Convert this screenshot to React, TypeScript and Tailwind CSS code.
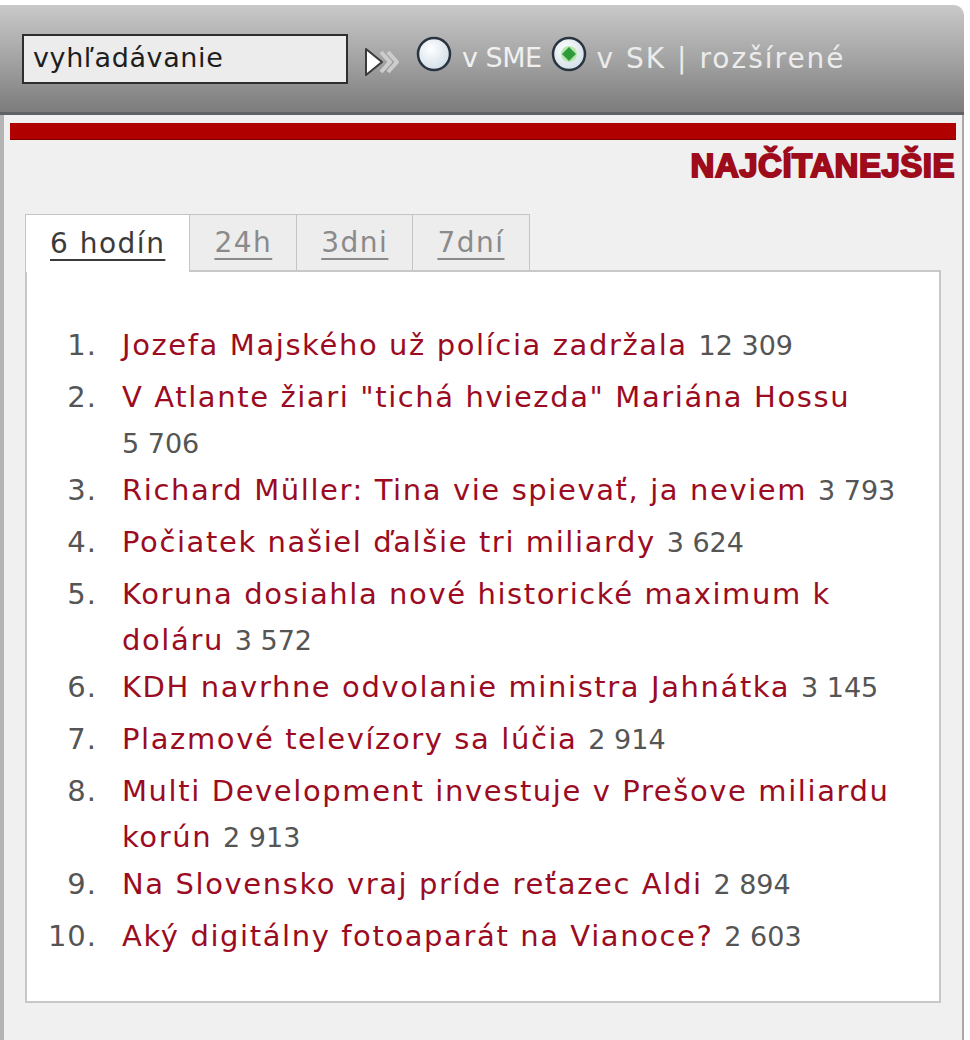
import React from 'react';

const items = [
  { title: 'Jozefa Majského už polícia zadržala', count: '12 309' },
  { title: 'V Atlante žiari "tichá hviezda" Mariána Hossu', count: '5 706' },
  { title: 'Richard Müller: Tina vie spievať, ja neviem', count: '3 793' },
  { title: 'Počiatek našiel ďalšie tri miliardy', count: '3 624' },
  { title: 'Koruna dosiahla nové historické maximum k doláru', count: '3 572' },
  { title: 'KDH navrhne odvolanie ministra Jahnátka', count: '3 145' },
  { title: 'Plazmové televízory sa lúčia', count: '2 914' },
  { title: 'Multi Development investuje v Prešove miliardu korún', count: '2 913' },
  { title: 'Na Slovensko vraj príde reťazec Aldi', count: '2 894' },
  { title: 'Aký digitálny fotoaparát na Vianoce?', count: '2 603' },
];

const tabs = ['6 hodín', '24h', '3dni', '7dní'];

const Radio = ({ checked }: { checked?: boolean }) => (
  <svg width="38" height="38" viewBox="0 0 38 38" className="shrink-0">
    <defs>
      <radialGradient id={checked ? 'rg2' : 'rg1'} cx="40%" cy="35%" r="70%">
        <stop offset="0%" stopColor="#ffffff" />
        <stop offset="100%" stopColor="#cfdde6" />
      </radialGradient>
    </defs>
    <circle cx="19" cy="19" r="16" fill={`url(#${checked ? 'rg2' : 'rg1'})`} stroke="#2a3440" strokeWidth="2.5" />
    {checked && (
      <>
        <circle cx="19" cy="19" r="8" fill="#b8e6b0" />
        <polygon points="19,12 26,19 19,26 12,19" fill="#2f9a3a" />
      </>
    )}
  </svg>
);

// white play triangle followed by a grey double chevron
const GoArrow = () => (
  <svg width="38" height="34" viewBox="0 0 38 34" className="shrink-0">
    <polyline points="19,7 28,17 19,27" fill="none" stroke="#cdcdcd" strokeWidth="4" strokeLinejoin="round" />
    <polyline points="26,7 35,17 26,27" fill="none" stroke="#cdcdcd" strokeWidth="4" strokeLinejoin="round" />
    <polygon points="4,4 20,17 4,30" fill="#ffffff" stroke="#3a3a3a" strokeWidth="2" strokeLinejoin="round" />
  </svg>
);

export default function App() {
  return (
    <div className="w-[970px] h-[1040px] bg-white overflow-hidden pt-[5px] font-['DejaVu_Sans',sans-serif]">
      <div className="w-[964px] h-[1035px] flex flex-col">
        {/* search bar */}
        <div className="h-[110px] shrink-0 rounded-tr-[10px] bg-gradient-to-b from-[#c9c9c9] via-[#a4a4a4] to-[#7c7c7c] border-b-[3px] border-[#5e6166] flex items-center pl-[22px]">
          <div className="w-[326px] h-[50px] border-2 border-[#2e2e2e] bg-[#ececec] flex items-center pl-[9px] text-[27px] text-[#1e1e1e] tracking-[0.6px]">
            vyhľadávanie
          </div>
          <div className="ml-[14px] mt-[6px]">
            <GoArrow />
          </div>
          <div className="ml-[15px] -mt-[10px]">
            <Radio />
          </div>
          <span className="ml-[9px] text-[27px] text-[#f0f0f0] tracking-[-0.5px]">v SME</span>
          <div className="ml-[8px] -mt-[10px]">
            <Radio checked />
          </div>
          <span className="ml-[9px] text-[28px] text-[#ececec] tracking-[2px]">v SK | rozšírené</span>
        </div>

        {/* panel */}
        <div className="flex-1 bg-[#f0f0f0] border-l-[4px] border-l-[#b4b4b4] border-r-[2px] border-r-[#a8a8a8] pl-[6px] pr-[6px] pt-[8px]">
          <div className="h-[17px] bg-[#b00000] border-b border-[#7a0000]" />
          <div className="flex justify-end pr-[1px] mt-[6px] h-[40px]">
            <span className="font-['Liberation_Sans',sans-serif] font-black text-[33px] leading-[40px] text-[#9e0b1a] tracking-[0.5px] [-webkit-text-stroke:2px_#9e0b1a]">
              NAJČÍTANEJŠIE
            </span>
          </div>

          {/* tabs */}
          <div className="ml-[15px] mt-[28px] flex h-[56px]">
            {tabs.map((t, i) => (
              <div
                key={t}
                className={
                  i === 0
                    ? 'relative z-10 h-[58px] bg-white border border-[#c4c4c4] border-b-0 px-[24px] flex items-center text-[28px] tracking-[1.5px] text-[#3a3a3a] underline underline-offset-[6px] decoration-[2px]'
                    : 'h-[56px] bg-[#ededed] border border-l-0 border-[#c4c4c4] border-b-0 px-[24px] flex items-center text-[28px] tracking-[1.5px] text-[#8a8a8a] underline underline-offset-[6px] decoration-[2px]'
                }
              >
                {t}
              </div>
            ))}
          </div>

          {/* list box */}
          <div className="ml-[15px] w-[916px] h-[733px] bg-white border-2 border-[#c8c8c8] pt-[50px] pr-[32px]">
            <ol className="flex flex-col">
              {items.map((it, i) => (
                <li key={i} className="flex min-h-[52px] text-[29px] leading-[46px]">
                  <span className="w-[70px] shrink-0 text-right text-[#555555] tracking-[1px]">{i + 1}.</span>
                  <span className="ml-[25px] flex-1 tracking-[1.6px]">
                    <span className="text-[#9b0b22]">{it.title}</span>{' '}
                    <span className="text-[#555555] text-[27px] tracking-[0px] whitespace-nowrap">{it.count}</span>
                  </span>
                </li>
              ))}
            </ol>
          </div>
        </div>
      </div>
    </div>
  );
}
